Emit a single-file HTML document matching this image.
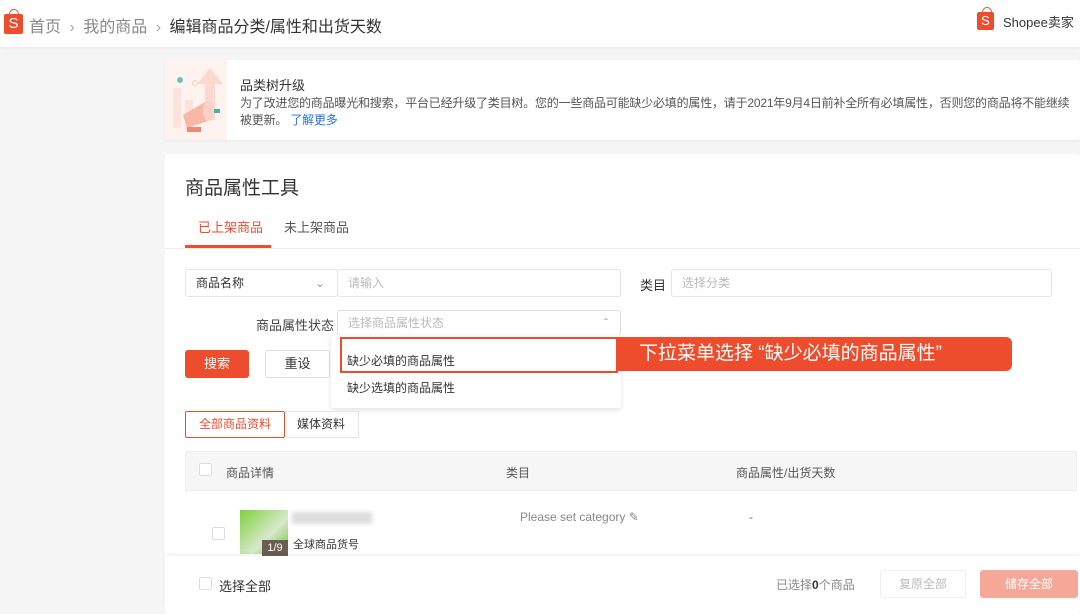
<!DOCTYPE html>
<html><head><meta charset="utf-8">
<style>
*{margin:0;padding:0;box-sizing:border-box}
body{width:1080px;height:606px;overflow:hidden;background:#f5f5f5;font-family:"Liberation Sans","Noto Sans CJK SC",sans-serif;color:#333;position:relative;font-size:12px}
.a{position:absolute}
.bag{position:absolute;background:#ee4d2d;border-radius:2px;color:#fff;text-align:center;font-size:15px;line-height:19px}
.bag:before{content:"";position:absolute;left:5px;top:-5px;width:8px;height:7px;border:1.5px solid #ee4d2d;border-bottom:none;border-radius:5px 5px 0 0}
.inp{position:absolute;border:1px solid #e5e5e5;border-radius:3px;background:#fff;color:#bbb;font-size:12px;line-height:26px;padding-left:10px}
.cb{position:absolute;width:13px;height:13px;border:1px solid #ddd;border-radius:2px;background:#fff}
</style></head><body>
<!-- header -->
<div class="a" style="left:0;top:0;width:1080px;height:47px;background:#fff;box-shadow:0 1px 3px rgba(0,0,0,.06)"></div>
<div class="bag" style="left:4px;top:14px;width:19px;height:20px">S</div>
<div class="a" style="left:29px;top:13px;font-size:16px;color:#888">首页 <span style="color:#aaa;margin:0 4px">›</span> 我的商品 <span style="color:#aaa;margin:0 4px">›</span> <span style="color:#333">编辑商品分类/属性和出货天数</span></div>
<div class="bag" style="left:977px;top:12px;width:17px;height:18px;font-size:13px;line-height:18px">S</div>
<div class="a" style="left:1003px;top:12px;font-size:13px;color:#333">Shopee卖家</div>

<!-- banner -->
<div class="a" style="left:165px;top:60px;width:915px;height:80px;background:#fff;border-radius:3px;box-shadow:0 1px 2px rgba(0,0,0,.06)"></div>
<div class="a" style="left:165px;top:60px;width:62px;height:80px;background:#fff3f0;border-radius:3px 0 0 3px"></div>
<svg class="a" style="left:165px;top:60px" width="62" height="80">
<path d="M45 8 L58 24 L50 24 L50 60 L40 60 L40 24 L32 24 Z" fill="#fcd8cf"/>
<rect x="8" y="28" width="8" height="40" fill="#fde3dc"/><rect x="20" y="40" width="8" height="30" fill="#fde3dc"/>
<path d="M18 55 L40 42 L46 60 L22 68 Z" fill="#f9b7a8"/><ellipse cx="43" cy="51" rx="5" ry="10" fill="#fcd0c4"/>
<rect x="22" y="67" width="14" height="5" fill="#f08a78"/>
<circle cx="15" cy="20" r="3" fill="#6cc6b4"/><circle cx="30" cy="23" r="2.5" fill="none" stroke="#f7d59a"/>
<rect x="49" y="49" width="6" height="4" fill="#3cb8a0"/>
</svg>
<div class="a" style="left:240px;top:75px;font-size:13px;color:#333">品类树升级</div>
<div class="a" style="left:240px;top:95px;font-size:12px;color:#555;width:840px;line-height:17px;letter-spacing:-0.2px">为了改进您的商品曝光和搜索，平台已经升级了类目树。您的一些商品可能缺少必填的属性，请于2021年9月4日前补全所有必填属性，否则您的商品将不能继续被更新。 <span style="color:#2673dd">了解更多</span></div>

<!-- main card -->
<div class="a" style="left:165px;top:154px;width:915px;height:460px;background:#fff;border-radius:3px"></div>
<div class="a" style="left:185px;top:173px;font-size:19px;color:#333">商品属性工具</div>
<div class="a" style="left:198px;top:217px;font-size:13px;color:#ee4d2d">已上架商品</div>
<div class="a" style="left:284px;top:217px;font-size:13px;color:#555">未上架商品</div>
<div class="a" style="left:185px;top:245px;width:86px;height:3px;background:#ee4d2d"></div>
<div class="a" style="left:165px;top:248px;width:915px;height:1px;background:#eee"></div>

<div class="inp" style="left:185px;top:269px;width:153px;height:28px;color:#333">商品名称<span style="position:absolute;right:12px;color:#999">⌄</span></div>
<div class="inp" style="left:337px;top:269px;width:284px;height:28px">请输入</div>
<div class="a" style="left:640px;top:275px;font-size:13px;color:#333">类目</div>
<div class="inp" style="left:671px;top:269px;width:381px;height:28px">选择分类</div>
<div class="a" style="left:256px;top:315px;font-size:13px;color:#444">商品属性状态</div>
<div class="inp" style="left:337px;top:310px;width:284px;height:26px;line-height:24px;border-color:#ddd">选择商品属性状态<span style="position:absolute;right:12px;color:#999">ˆ</span></div>

<!-- dropdown -->
<div class="a" style="left:331px;top:335px;width:290px;height:73px;background:#fff;border-radius:3px;box-shadow:0 2px 6px rgba(0,0,0,.12)"></div>
<div class="a" style="left:340px;top:337px;width:278px;height:36px;border:2px solid #ee4d2d"></div>
<div class="a" style="left:347px;top:352px;font-size:12px;color:#333">缺少必填的商品属性</div>
<div class="a" style="left:347px;top:379px;font-size:12px;color:#333">缺少选填的商品属性</div>
<div class="a" style="left:617px;top:337px;width:395px;height:34px;background:#ee4d2d;border-radius:0 6px 6px 0;color:#fff;font-size:19px;line-height:34px;padding-left:22px">下拉菜单选择 “缺少必填的商品属性”</div>

<div class="a" style="left:185px;top:350px;width:64px;height:28px;background:#ee4d2d;border-radius:3px;color:#fff;font-size:13px;line-height:28px;text-align:center">搜索</div>
<div class="a" style="left:265px;top:350px;width:65px;height:28px;border:1px solid #ddd;border-radius:3px;color:#333;font-size:13px;line-height:26px;text-align:center">重设</div>

<div class="a" style="left:185px;top:411px;width:100px;height:27px;border:1px solid #ee4d2d;border-radius:2px 0 0 2px;color:#ee4d2d;font-size:12px;line-height:25px;text-align:center">全部商品资料</div>
<div class="a" style="left:284px;top:411px;width:75px;height:27px;border:1px solid #e5e5e5;border-left:none;color:#333;font-size:12px;line-height:25px;text-align:center">媒体资料</div>

<!-- table -->
<div class="a" style="left:185px;top:451px;width:892px;height:40px;background:#f6f6f6;border:1px solid #eee"></div>
<div class="cb" style="left:199px;top:463px"></div>
<div class="a" style="left:226px;top:464px;color:#555">商品详情</div>
<div class="a" style="left:506px;top:464px;color:#555">类目</div>
<div class="a" style="left:736px;top:464px;color:#555">商品属性/出货天数</div>
<div class="cb" style="left:212px;top:527px"></div>
<div class="a" style="left:240px;top:510px;width:48px;height:44px;background:linear-gradient(135deg,#7fd13a,#d8e8cc 60%,#6cc42c)"></div>
<div class="a" style="left:262px;top:540px;width:26px;height:16px;background:#6b5d52;color:#fff;font-size:11px;line-height:16px;text-align:center">1/9</div>
<div class="a" style="left:292px;top:512px;width:80px;height:12px;background:#ddd;filter:blur(2px)"></div>
<div class="a" style="left:293px;top:536px;font-size:11px;color:#333">全球商品货号</div>
<div class="a" style="left:520px;top:510px;color:#888">Please set category ✎</div>
<div class="a" style="left:749px;top:510px;color:#666">-</div>

<!-- footer -->
<div class="a" style="left:165px;top:556px;width:915px;height:50px;background:#fff;box-shadow:0 -2px 4px rgba(0,0,0,.06)"></div>
<div class="cb" style="left:199px;top:577px"></div>
<div class="a" style="left:219px;top:576px;font-size:13px;color:#333">选择全部</div>
<div class="a" style="left:776px;top:576px;font-size:12px;color:#888">已选择<b style="color:#333">0</b>个商品</div>
<div class="a" style="left:880px;top:570px;width:86px;height:28px;border:1px solid #eee;border-radius:3px;color:#bbb;font-size:12px;line-height:26px;text-align:center">复原全部</div>
<div class="a" style="left:980px;top:570px;width:98px;height:28px;background:#f5a898;border-radius:3px;color:#fff;font-size:12px;line-height:28px;text-align:center">储存全部</div>
</body></html>
